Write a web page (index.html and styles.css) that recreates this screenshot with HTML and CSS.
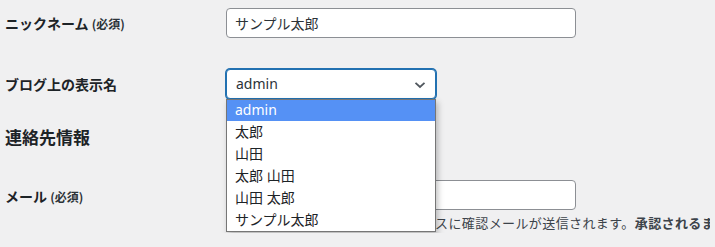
FILE: index.html
```html
<!DOCTYPE html>
<html lang="ja">
<head>
<meta charset="utf-8">
<link rel="stylesheet" href="styles.css">
</head>
<body>
<div class="page">
  <div class="row row-nick">
    <label class="label">ニックネーム <span class="req">(必須)</span></label>
    <div class="field"><input class="text-input" type="text" value="サンプル太郎"></div>
  </div>
  <div class="row row-display">
    <label class="label">ブログ上の表示名</label>
    <div class="field">
      <div class="select-wrap">
        <div class="select-box">admin</div>
        <svg class="chevron" width="12" height="8" viewBox="0 0 12 8"><path d="M1.5 1.8 L6 6 L10.5 1.8" fill="none" stroke="#50575e" stroke-width="1.8"/></svg>
        <ul class="dropdown">
          <li class="opt active">admin</li>
          <li class="opt">太郎</li>
          <li class="opt">山田</li>
          <li class="opt">太郎 山田</li>
          <li class="opt">山田 太郎</li>
          <li class="opt">サンプル太郎</li>
        </ul>
      </div>
    </div>
  </div>
  <h2 class="section-title">連絡先情報</h2>
  <div class="row row-mail">
    <label class="label label-mail">メール <span class="req">(必須)</span></label>
    <div class="field">
      <input class="text-input" type="text" value="">
      <p class="description">Eメールを変更すると新しいアドレスに確認メールが送信されます。<strong>承認されるまで新しいアドレスは有効になりません。</strong></p>
    </div>
  </div>
</div>
</body>
</html>
```

FILE: styles.css
```css
html, body {
  margin: 0;
  padding: 0;
  background: #f0f0f1;
  overflow: hidden;
}
body {
  font-family: "Noto Sans", "Noto Sans CJK JP", sans-serif;
  color: #1d2327;
  font-size: 14px;
}
.page {
  padding: 8px 0 0 5px;
  width: 710px;
  overflow: hidden;
}
.row {
  display: flex;
  align-items: flex-start;
}
.label {
  width: 221px;
  flex: none;
  font-weight: 700;
  font-size: 14px;
  line-height: 30px;
  font-family: "Noto Sans CJK JP", sans-serif;
  color: #1d2327;
}
.req {
  font-size: 12px;
  font-weight: 700;
  color: #2c3338;
}
.field {
  flex: none;
  width: 484px;
  overflow: hidden;
}
.row-display .field {
  overflow: visible;
}
.text-input {
  box-sizing: border-box;
  width: 350px;
  height: 30px;
  margin: 0;
  padding: 0 8px;
  border: 1px solid #8c8f94;
  border-radius: 4px;
  background: #fff;
  font-family: "Noto Sans CJK JP", sans-serif;
  font-size: 14px;
  color: #2c3338;
  display: block;
}
.row-display {
  margin-top: 30px;
  position: relative;
  z-index: 5;
}
.select-wrap {
  position: relative;
  width: 210px;
}
.select-box {
  box-sizing: border-box;
  width: 210px;
  height: 30px;
  border: 1px solid #2271b1;
  box-shadow: 0 0 0 1px #2271b1;
  border-radius: 4px;
  background: #fff;
  padding: 0 9px;
  line-height: 27px;
  font-size: 14px;
  color: #2c3338;
  font-family: "Noto Sans", sans-serif;
}
.chevron {
  position: absolute;
  right: 10px;
  top: 12px;
}
.dropdown {
  position: absolute;
  left: 0;
  top: 30px;
  z-index: 5;
  box-sizing: border-box;
  width: 210px;
  margin: 0;
  padding: 0;
  list-style: none;
  background: #fff;
  border: 1px solid #767676;
  box-shadow: 2px 3px 6px rgba(0, 0, 0, 0.25);
}
.opt {
  height: 22px;
  line-height: 21px;
  padding-left: 8px;
  font-size: 14px;
  color: #1d2327;
  font-family: "Noto Sans", "Noto Sans CJK JP", sans-serif;
  white-space: nowrap;
}
.opt.active {
  background: #5591f5;
  color: #fff;
  height: 21px;
  line-height: 20px;
}
.section-title {
  margin: 26px 0 0 0;
  font-size: 17px;
  line-height: 24px;
  font-weight: 700;
  font-family: "Noto Sans CJK JP", sans-serif;
  color: #1d2327;
}
.row-mail {
  margin-top: 31px;
}
.label-mail {
  padding-top: 1px;
}
.description {
  margin: 3px 0 0 0;
  font-size: 13px;
  line-height: 20px;
  letter-spacing: 0.4px;
  white-space: nowrap;
  color: #3c434a;
  font-family: "Noto Sans CJK JP", sans-serif;
}
.description strong {
  font-weight: 700;
}
```
